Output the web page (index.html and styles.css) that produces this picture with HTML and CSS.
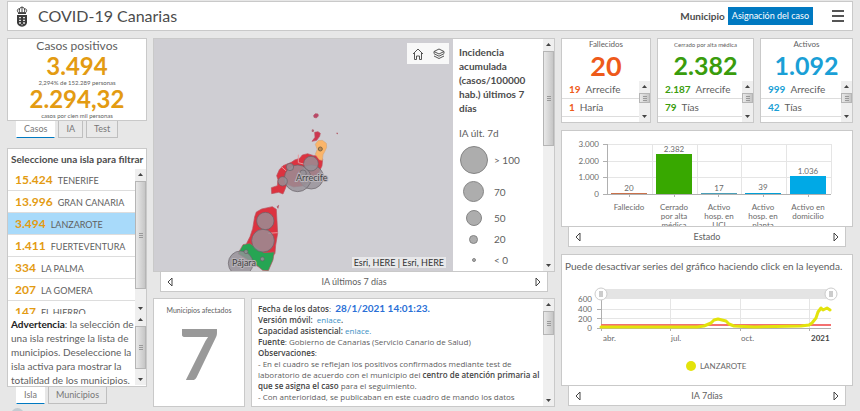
FILE: index.html
```html
<!DOCTYPE html>
<html lang="es">
<head>
<meta charset="utf-8">
<title>COVID-19 Canarias</title>
<link rel="stylesheet" href="styles.css">
</head>
<body>
<header class="topbar card">
  <svg class="crest" viewBox="0 0 36 63" aria-hidden="true">
    <g fill="none" stroke="#444" stroke-width="3">
      <path d="M7 20C1 13 5 7 11 9c0-5 5-6 7-3 2-3 7-2 7 3 6-2 10 4 4 11z"/>
      <path d="M18 1v6M11 9c-2 5-1 8 1 11M25 9c2 5 1 8-1 11M18 7v13"/>
    </g>
    <path d="M6 20h24v4H6z" fill="#444"/>
    <path d="M3 27h30v22c0 8-6 12-15 13C9 61 3 57 3 49z" fill="#3c3c3c"/>
    <path d="M9 33h6v4H9zM21 33h6v4h-6zM9 41h6v4H9zM21 41h6v4h-6zM9 49h6v4H9zM21 49h6v4h-6zM16 55h4v3h-4z" fill="#ddd"/>
  </svg>
  <h1>COVID-19 Canarias</h1>
  <span class="mode-label" id="mode">Municipio</span>
  <button class="mode-button" aria-describedby="mode">Asignación del caso</button>
  <button class="menu-button" aria-label="Menú"><span></span><span></span><span></span></button>
</header>

<main class="board">
  <div class="column side">
    <div class="stack">
      <section class="card cases">
        <h2>Casos positivos</h2>
        <p class="figure amber">3.494</p>
        <p class="note">2,294% de 152.289 personas</p>
        <p class="figure amber">2.294,32</p>
        <p class="note">casos por cien mil personas</p>
      </section>
      <nav class="tabs">
        <button class="tab active">Casos</button><button class="tab">IA</button><button class="tab">Test</button>
      </nav>
    </div>
    <div class="stack grow">
      <section class="card islands">
        <h2>Seleccione una isla para filtrar</h2>
        <div class="scroll island-scroll">
          <ul class="rows">
            <li><b>15.424</b>TENERIFE</li>
            <li><b>13.996</b>GRAN CANARIA</li>
            <li class="selected"><b>3.494</b>LANZAROTE</li>
            <li><b>1.411</b>FUERTEVENTURA</li>
            <li><b>334</b>LA PALMA</li>
            <li><b>207</b>LA GOMERA</li>
            <li><b>147</b>EL HIERRO</li>
          </ul>
          <div class="bar long" aria-hidden="true"><i></i></div>
        </div>
        <div class="scroll warning">
          <p><b>Advertencia</b>: la selección de una isla restringe la lista de municipios. Deseleccione la isla activa para mostrar la totalidad de los municipios.</p>
          <div class="bar medium" aria-hidden="true"><i></i></div>
        </div>
      </section>
      <nav class="tabs">
        <button class="tab active">Isla</button><button class="tab">Municipios</button>
      </nav>
    </div>
  </div>

  <div class="column center">
    <div class="stack grow">
      <section class="card map-card">
        <div class="map">
          <svg viewBox="0 0 299 232" preserveAspectRatio="xMidYMid slice" role="img" aria-label="Mapa de incidencia">
            <g transform="translate(66 61) scale(.3333)">
              <g fill="#dc3340" stroke="#b85560" stroke-width="2">
                <path d="M281 46l5-5 8 1 1 6-6 6-7-2z" fill="#b8476a"/>
                <path d="M284 97l10-2 7 5-2 9-9 12-14 3 9-12z" fill="#ce3650"/>
                <path d="M277 89l4 1-1 5-4-1zM350 99l4 1-2 2zM171 320l5-4-2 9z" fill="#887783"/>
                <path d="M154 263l18-6 2-18-4-12 8-18 11-12 25-10 10-7 15-5 8-10 16-4 18 6 18 0 9 11-2 20-10 20-10 14-35 25-30 4-20-8-8 20-4 9-13-5-21 4z"/>
                <path d="M104 350l5-14 16-9 32-7 12 8 2 34 2 38-6 36-2 24-25 30-28 8-20-18-12-50 10-20 8-24z"/>
                <path d="M69 434l20-4 15 10 28 18 31-2-4 24-14 32-17-1-24-20-50-30z" fill="#26a553"/>
              </g>
              <path d="M286 163l6-15-6-15 8-11 13-1 12 9 1 12-6 13-5 9-2 17-9-2z" fill="#fbb569" stroke="#d8a878" stroke-width="2"/>
              <path d="M235 164v24l20 5M184 200l15 13M145 400l28-2" fill="none" stroke="#e9989d" stroke-width="3"/>
              <g fill="#969199" fill-opacity=".82" stroke="#666067" stroke-width="2">
                <circle cx="274" cy="231" r="36"/><circle cx="233" cy="235" r="40"/>
                <circle cx="273" cy="191" r="22"/><circle cx="210" cy="201" r="11"/>
                <circle cx="188" cy="244" r="14"/><circle cx="249" cy="220" r="10"/>
                <circle cx="136" cy="363" r="26"/><circle cx="129" cy="422" r="34"/>
                <circle cx="62" cy="490" r="37"/><circle cx="127" cy="477" r="6"/>
                <circle cx="78" cy="455" r="6"/>
              </g>
              <circle cx="301" cy="147" r="6" fill="#c08a50" stroke="#7b6340" stroke-width="3"/>
            </g>
            <text class="place" x="142" y="142">Arrecife</text>
            <text class="place" x="78" y="227">Pájara</text>
          </svg>
          <div class="map-tools">
            <button aria-label="Inicio"><svg viewBox="0 0 12 12"><path d="M1 6l5-5 5 5M2.500 5v6.500h2v-3.500h3v3.500h2V5"/></svg></button>
            <button aria-label="Capas"><svg viewBox="0 0 12 12"><path d="M6 1l5 2.500-5 2.500-5-2.500zM1 5.700l5 2.500 5-2.500M1 8l5 2.500L11 8M1 3.500v2M11 3.500v2"/></svg></button>
          </div>
          <p class="credits">Esri, HERE | Esri, HERE</p>
        </div>
        <div class="scroll legend">
          <div class="legend-body">
            <h2>Incidencia acumulada (casos/100000 hab.) últimos 7 días</h2>
            <p>IA últ. 7d</p>
            <ul>
              <li class="s1"><span><i></i></span>&gt; 100</li>
              <li class="s2"><span><i></i></span>70</li>
              <li class="s3"><span><i></i></span>50</li>
              <li class="s4"><span><i></i></span>20</li>
              <li class="s5"><span><i></i></span>&lt; 0</li>
            </ul>
          </div>
          <div class="bar half" aria-hidden="true"><i></i></div>
        </div>
      </section>
      <nav class="pager">
        <button aria-label="Anterior"><svg viewBox="0 0 6 10"><path d="M5 1v8L1 5z"/></svg></button>
        <span>IA últimos 7 días</span>
        <button aria-label="Siguiente"><svg viewBox="0 0 6 10"><path d="M1 1v8l4-4z"/></svg></button>
      </nav>
    </div>
    <div class="bottom">
      <section class="card towns">
        <h2>Municipios afectados</h2>
        <p>7</p>
      </section>
      <section class="card scroll info">
        <div class="info-body">
          <p><b>Fecha de los datos</b>: &nbsp;<b class="date">28/1/2021 14:01:23.</b></p>
          <p><b>Versión móvil:</b> &nbsp;<a href="#">enlace</a><b>.</b></p>
          <p><b>Capacidad asistencial:</b> <a href="#">enlace.</a></p>
          <p><b>Fuente</b>: Gobierno de Canarias (Servicio Canario de Salud)</p>
          <p><b>Observaciones</b>:</p>
          <p>- En el cuadro se reflejan los positivos confirmados mediante test de<br>laboratorio de acuerdo con el municipio del <b>centro de atención primaria al<br>que se asigna el caso</b> para el seguimiento.</p>
          <p>- Con anterioridad, se publicaban en este cuadro de mando los datos<br>agregados según el municipio de residencia de la persona.</p>
        </div>
        <div class="bar short" aria-hidden="true"><i></i></div>
      </section>
    </div>
  </div>

  <div class="column">
    <div class="states">
      <section class="card state red">
        <h2>Fallecidos</h2>
        <p class="figure">20</p>
        <div class="scroll">
          <ul><li><b>19</b>Arrecife</li><li><b>1</b>Haría</li></ul>
          <div class="bar tiny" aria-hidden="true"><i></i></div>
        </div>
      </section>
      <section class="card state green">
        <h2 class="small">Cerrado por alta médica</h2>
        <p class="figure">2.382</p>
        <div class="scroll">
          <ul><li><b>2.187</b>Arrecife</li><li><b>79</b>Tías</li></ul>
          <div class="bar tiny" aria-hidden="true"><i></i></div>
        </div>
      </section>
      <section class="card state blue">
        <h2>Activos</h2>
        <p class="figure">1.092</p>
        <div class="scroll">
          <ul><li><b>999</b>Arrecife</li><li><b>42</b>Tías</li></ul>
          <div class="bar tiny" aria-hidden="true"><i></i></div>
        </div>
      </section>
    </div>
    <div class="stack">
      <section class="card">
        <svg class="chart" viewBox="0 0 290 95" role="img" aria-label="Casos por estado">
          <g class="grid"><path d="M45 13h224M45 30h224M45 46h224M90 13v50M135 13v50M179 13v50M224 13v50M269 13v50"/></g>
          <path class="axis" d="M45 13v50h224M41 13h4M41 30h4M41 46h4M41 63h4M67 63v3M112 63v3M156 63v3M201 63v3M246 63v3"/>
          <path d="M49 62h36v1H49z" fill="#c9714a"/>
          <path d="M94 23h36v40H94z" fill="#38a800"/>
          <path d="M139 62h36v1h-36z" fill="#4a9fb8"/>
          <path d="M183 62h36v1h-36z" fill="#00a0d8"/>
          <path d="M228 45h36v18h-36z" fill="#00a9e6"/>
          <g class="end"><text x="37" y="16">3.000</text><text x="37" y="33">2.000</text><text x="37" y="49">1.000</text><text x="37" y="66">0</text></g>
          <g class="mid">
            <text x="67" y="60">20</text><text x="112" y="21">2.382</text><text x="157" y="60">17</text><text x="201" y="59">39</text><text x="246" y="43">1.036</text>
            <text x="67" y="79">Fallecido</text>
            <text x="112" y="79">Cerrado</text><text x="112" y="88">por alta</text><text x="112" y="97">médica</text>
            <text x="157" y="79">Activo</text><text x="157" y="88">hosp. en</text><text x="157" y="97">UCI</text>
            <text x="201" y="79">Activo</text><text x="201" y="88">hosp. en</text><text x="201" y="97">planta</text>
            <text x="246" y="79">Activo en</text><text x="246" y="88">domicilio</text>
          </g>
        </svg>
      </section>
      <nav class="pager">
        <button aria-label="Anterior"><svg viewBox="0 0 6 10"><path d="M5 1v8L1 5z"/></svg></button>
        <span>Estado</span>
        <button aria-label="Siguiente"><svg viewBox="0 0 6 10"><path d="M1 1v8l4-4z"/></svg></button>
      </nav>
    </div>
    <div class="stack">
      <section class="card">
        <p class="hint">Puede desactivar series del gráfico haciendo click en la leyenda.</p>
        <svg class="chart" viewBox="0 0 290 110" role="img" aria-label="IA 7 días en Lanzarote">
          <path d="M38 14h231v10H38z" fill="#e4e4e4"/>
          <g class="grid"><path d="M39 34h230M39 43h230M108 24v29M178 24v29M247 24v29"/></g>
          <path class="axis" d="M39 24v29h230M35 34h4M35 43h4M35 53h4M39 53v3M108 53v3M178 53v3M247 53v3"/>
          <path d="M39 49h230v2H39z" fill="#f47070"/>
          <path d="M39 52H135L142 51 149 48 152 45 156 44 160 45 164 46 167 49 172 51 192 52 239 51 247 50 250 48 254 43 256 37 259 33 261 35 265 33 268 35" fill="none" stroke="#e3e30b" stroke-width="3" stroke-linejoin="round" stroke-linecap="round"/>
          <g fill="#fff" stroke="#ccc"><circle cx="39" cy="19" r="6"/><circle cx="269" cy="19" r="6"/></g>
          <path d="M38 16v6M40 16v6M268 16v6M270 16v6" stroke="#999"/>
          <g class="end"><text x="30" y="27">600</text><text x="30" y="37">400</text><text x="30" y="47">200</text><text x="30" y="56">0</text></g>
          <text x="41" y="66">abr.</text><text x="109" y="66">jul.</text><text x="179" y="66">oct.</text><text class="strong" x="249" y="66">2021</text>
          <circle cx="129" cy="91" r="5" fill="#e3e30b"/>
          <text x="138" y="94">LANZAROTE</text>
        </svg>
      </section>
      <nav class="pager">
        <button aria-label="Anterior"><svg viewBox="0 0 6 10"><path d="M5 1v8L1 5z"/></svg></button>
        <span>IA 7días</span>
        <button aria-label="Siguiente"><svg viewBox="0 0 6 10"><path d="M1 1v8l4-4z"/></svg></button>
      </nav>
    </div>
  </div>
</main>
</body>
</html>
```
FILE: styles.css
```css
* { box-sizing: border-box; margin: 0; padding: 0; }

body {
  min-height: 100vh;
  padding: 1px 7px 5px;
  display: flex;
  flex-direction: column;
  gap: 7px;
  overflow: hidden;
  background: #e7e7e7;
  color: #606060;
  font: 10px/14px Lato, "Noto Sans", sans-serif;
}

button { border: 0; background: none; color: inherit; font: inherit; cursor: pointer; }
ul { list-style: none; }
a { color: #3b8fc4; text-decoration: none; }
b { color: #444; }

.card { background: #fff; border: 1px solid #c9c9c9; }

/* Header */
.topbar { display: flex; align-items: center; height: 30px; padding: 0 8px; }
.crest { width: 12px; height: 21px; margin-right: 10px; }
.topbar h1 { flex: 1; font-size: 16px; line-height: 20px; font-weight: 400; color: #4c4c4c; }
.mode-label { font-weight: 700; color: #4c4c4c; margin-right: 3px; }
.mode-button { height: 18px; padding: 0 4px; background: #0079c1; color: #fff; font-size: 9px; }
.menu-button { display: grid; gap: 3px; width: 12px; margin-left: 19px; }
.menu-button span { height: 2px; background: #555; }

/* Page grid */
.board {
  flex: 1;
  display: grid;
  grid-template-columns: 140fr 402fr 292fr;
  gap: 6px;
}
.column { display: flex; flex-direction: column; gap: 7px; min-width: 0; }
.stack { display: flex; flex-direction: column; }
.grow { flex: 1; }
.grow > .card { flex: 1; }
.center { gap: 6px; }
.side { position: relative; gap: 10px; padding-bottom: 3px; }
.side::after {
  content: "";
  position: absolute;
  bottom: -14px;
  left: 4px;
  width: 13px;
  height: 13px;
  border-radius: 50%;
  background: #c3ccd2;
}

/* Scrolling areas */
.scroll { display: flex; overflow: hidden; }
.scroll > :first-child { flex: 1; min-width: 0; }
.bar {
  flex: none;
  display: flex;
  flex-direction: column;
  justify-content: space-between;
  width: 11px;
  background: #efefef;
}
.bar::before, .bar::after {
  content: "";
  flex: none;
  height: 12px;
  background: #444;
  clip-path: polygon(50% 4px, 8px 7px, 3px 7px);
}
.bar::after { clip-path: polygon(3px 5px, 8px 5px, 50% 8px); }
.bar i {
  border: 1px solid #b5b5b5;
  background:
    repeating-linear-gradient(#999 0 1px, transparent 1px 2px) center / 4px 5px no-repeat,
    linear-gradient(90deg, #e8e8e8, #c6c6c6);
}
.bar.long i { height: 108px; margin-bottom: auto; }
.bar.medium i { height: 43px; margin-bottom: auto; }
.bar.half i { height: 95px; margin-bottom: auto; }
.bar.short i { height: 24px; margin-bottom: auto; }
.bar.tiny i { height: 10px; margin-bottom: auto; }

/* Tabs and pagers */
.tabs { display: flex; gap: 3px; padding-left: 9px; }
.tab {
  height: 17px;
  padding: 0 7px;
  border: 1px solid #bfbfbf;
  border-top: 0;
  background: #e9e9e9;
  color: #777;
  font-size: 9px;
}
.tab.active { border-color: #fff; border-bottom: 1px solid #0079c1; background: #fff; }
.pager {
  display: flex;
  align-items: center;
  height: 20px;
  margin: 0 7px;
  padding: 0 6px;
  border: 1px solid #c9c9c9;
  border-top: 0;
  background: #fff;
  font-size: 9px;
}
.pager span { flex: 1; text-align: center; }
.pager button, .pager svg { display: block; width: 6px; height: 10px; }
.pager path { fill: none; stroke: #444; }

/* Cases and islands */
.cases { height: 83px; overflow: hidden; text-align: center; }
.cases h2 { font-size: 12px; line-height: 14px; font-weight: 400; }
.figure { font-weight: 700; }
.cases .figure { font-size: 24px; line-height: 26px; }
.amber, .rows b { color: #e39b12; }
.note { font-size: 6px; line-height: 7px; white-space: nowrap; }

.islands { display: flex; flex-direction: column; }
.islands h2 { padding-left: 3px; font-size: 10px; line-height: 20px; color: #4c4c4c; white-space: nowrap; }
.island-scroll { height: 145px; }
.rows li {
  height: 22px;
  padding-left: 7px;
  border-bottom: 1px solid #ddd;
  line-height: 22px;
  font-size: 9px;
  white-space: nowrap;
}
.rows b { margin-right: 5px; font-size: 12px; }
.rows .selected { background: #a8dafa; }
.warning { height: 71px; }
.warning p { padding-left: 3px; padding-top: 3px; }
.warning b { color: #222; }

/* Map */
.map-card { display: flex; min-height: 233px; }
.map { position: relative; flex: 1; overflow: hidden; background: #cfced3; }
.map > svg { display: block; width: 100%; height: 100%; }
.place { font-size: 9px; fill: #444; paint-order: stroke; stroke: #b9b4ba; stroke-width: 2px; }
.map-tools { position: absolute; top: 4px; right: 4px; display: flex; background: #f8f8f8; }
.map-tools button { width: 21px; height: 21px; padding: 5px; }
.map-tools svg { display: block; width: 12px; height: 12px; fill: none; stroke: #555; stroke-width: 1px; }
.credits { position: absolute; right: 7px; bottom: 3px; padding: 0 2px; background: #e8e8ea; font-size: 9px; line-height: 11px; color: #333; }
.legend { width: 101px; }
.legend-body { padding: 6px 0 0 6px; }
.legend h2 { margin-bottom: 11px; font-size: 10px; line-height: 14px; color: #4c4c4c; }
.legend ul { padding-top: 4px; }
.legend li { display: flex; align-items: center; gap: 6px; }
.legend span { display: grid; place-items: center; width: 29px; }
.legend span i { border: 1px solid #858585; border-radius: 50%; background: #adadad; }
.s1 { height: 32px; }
.s2 { height: 31px; }
.s3 { height: 21px; }
.s4 { height: 22px; }
.s5 { height: 19px; }
.s1 i { width: 28px; height: 28px; }
.s2 i { width: 21px; height: 21px; }
.s3 i { width: 16px; height: 16px; }
.s4 i { width: 9px; height: 9px; }
.s5 i { width: 4px; height: 4px; }

/* Municipalities and notes */
.bottom { display: grid; grid-template-columns: 92fr 304fr; gap: 6px; height: 109px; }
.towns { padding-top: 5px; text-align: center; }
.towns h2 { font-size: 7px; line-height: 12px; font-weight: 400; }
.towns p { font-size: 70px; line-height: 75px; font-weight: 700; color: #999; }
.info-body { padding: 4px 0 0 6px; font: 8px/11px "Open Sans", sans-serif; white-space: nowrap; }
.info b { font-weight: 600; }
.info .date { color: #2a6fd6; font-family: Lato, sans-serif; font-size: 10px; font-weight: 700; line-height: 11px; }

/* States */
.states { display: grid; grid-template-columns: 90fr 97fr 93fr; gap: 6px; height: 85px; }
.state { display: flex; flex-direction: column; min-width: 0; text-align: center; }
.state h2 { font-size: 8px; line-height: 11px; font-weight: 400; white-space: nowrap; }
.state h2.small { font-size: 6px; }
.state .figure { font-size: 25px; line-height: 31px; }
.state.red .figure { font-size: 27px; }
.state .scroll { flex: 1; text-align: left; }
.state li { height: 18px; padding-left: 7px; border-bottom: 1px solid #ddd; line-height: 17px; }
.state li b { margin-right: 5px; }
.red b, .red .figure { color: #ee5a1a; }
.green b, .green .figure { color: #3a9c0c; }
.blue b, .blue .figure { color: #1a9fd6; }

/* Charts */
.chart { display: block; width: 100%; height: auto; }
.chart text { font-size: 8px; fill: #6a6a6a; }
.chart .end { text-anchor: end; }
.chart .mid { text-anchor: middle; }
.chart .strong { font-weight: 700; fill: #444; }
.grid { fill: none; stroke: #e5e5e5; shape-rendering: crispEdges; }
.axis { fill: none; stroke: #b0b0b0; shape-rendering: crispEdges; }
.hint { padding: 3px 3px 0; font-size: 10px; line-height: 17px; white-space: nowrap; }
```
